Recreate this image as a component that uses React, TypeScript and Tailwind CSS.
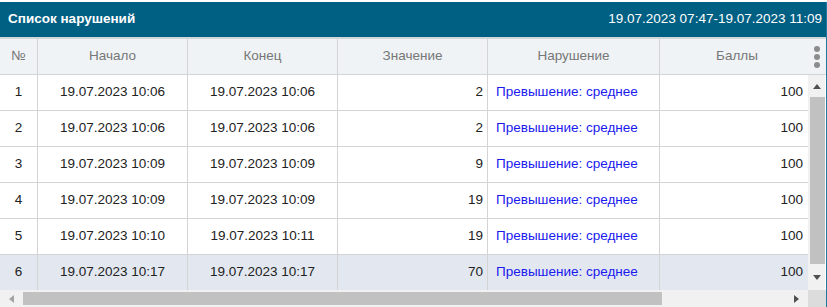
type Row = {
  n: number;
  start: string;
  end: string;
  value: number;
  violation: string;
  score: number;
};

const rows: Row[] = [
  { n: 1, start: "19.07.2023 10:06", end: "19.07.2023 10:06", value: 2, violation: "Превышение: среднее", score: 100 },
  { n: 2, start: "19.07.2023 10:06", end: "19.07.2023 10:06", value: 2, violation: "Превышение: среднее", score: 100 },
  { n: 3, start: "19.07.2023 10:09", end: "19.07.2023 10:09", value: 9, violation: "Превышение: среднее", score: 100 },
  { n: 4, start: "19.07.2023 10:09", end: "19.07.2023 10:09", value: 19, violation: "Превышение: среднее", score: 100 },
  { n: 5, start: "19.07.2023 10:10", end: "19.07.2023 10:11", value: 19, violation: "Превышение: среднее", score: 100 },
  { n: 6, start: "19.07.2023 10:17", end: "19.07.2023 10:17", value: 70, violation: "Превышение: среднее", score: 100 },
];

const Arrow = ({ dir }: { dir: "up" | "down" | "left" | "right" }) => {
  const pts = {
    up: "0,5 4,0 8,5",
    down: "0,0 8,0 4,5",
    left: "5,0 5,8 0,4",
    right: "0,0 0,8 5,4",
  }[dir];
  const horiz = dir === "left" || dir === "right";
  return (
    <svg width={horiz ? 5 : 8} height={horiz ? 8 : 5} viewBox={horiz ? "0 0 5 8" : "0 0 8 5"}>
      <polygon points={pts} fill={dir === "left" ? "#a3a3a3" : "#505050"} />
    </svg>
  );
};

// column menu dots in the header
const Dots = () => (
  <svg width="8" height="24" viewBox="0 0 8 24">
    <circle cx="4" cy="4" r="3" fill="#8c8c8c" />
    <circle cx="4" cy="12" r="3" fill="#8c8c8c" />
    <circle cx="4" cy="20" r="3" fill="#8c8c8c" />
  </svg>
);

const App = () => {
  return (
    <div className="w-[827px] h-[307px] bg-white overflow-hidden pt-[2px] font-['Liberation_Sans',Arial,sans-serif] text-[13.5px]">
      <div className="h-[305px] border-r border-[#1f7aa0] flex flex-col">
        <div className="h-[35px] shrink-0 bg-[#006083] flex items-center justify-between pl-[8px] pr-[4px] text-white">
          <span className="font-bold">Список нарушений</span>
          <span>19.07.2023 07:47-19.07.2023 11:09</span>
        </div>
        <div className="h-[2px] shrink-0 bg-[#d3d6d8]" />
        <div className="h-[36px] shrink-0 flex bg-[#eff3f6] text-[#777] border-b border-[#d4d4d4]">
          <div className="w-[38px] border-r border-[#d4d4d4] flex items-center justify-center">№</div>
          <div className="w-[150px] border-r border-[#d4d4d4] flex items-center justify-center">Начало</div>
          <div className="w-[150px] border-r border-[#d4d4d4] flex items-center justify-center">Конец</div>
          <div className="w-[150px] border-r border-[#d4d4d4] flex items-center justify-center">Значение</div>
          <div className="w-[172px] border-r border-[#d4d4d4] flex items-center justify-center">Нарушение</div>
          <div className="flex-1 flex items-center justify-center pl-[6px]">Баллы</div>
          <div className="w-[18px] flex items-center justify-center">
            <Dots />
          </div>
        </div>
        <div className="flex-1 flex min-h-0">
          <div className="w-[808px] flex flex-col text-[#222]">
            {rows.map((r, i) => (
              <div
                key={r.n}
                className={`flex ${i === rows.length - 1 ? "h-[35px] bg-[#e3e8f0]" : "h-[36px] border-b border-[#d4d4d4]"}`}
              >
                <div className="w-[38px] border-r border-[#d4d4d4] flex items-center justify-center">{r.n}</div>
                <div className="w-[150px] border-r border-[#d4d4d4] flex items-center justify-center">{r.start}</div>
                <div className="w-[150px] border-r border-[#d4d4d4] flex items-center justify-center">{r.end}</div>
                <div className="w-[150px] border-r border-[#d4d4d4] flex items-center justify-end pr-[4px]">{r.value}</div>
                <div className="w-[172px] border-r border-[#d4d4d4] flex items-center pl-[8px] text-[#1a1aee]">{r.violation}</div>
                <div className="flex-1 flex items-center justify-end pr-[5px]">{r.score}</div>
              </div>
            ))}
          </div>
          <div className="w-[17px] bg-[#f1f1f1] flex flex-col items-center">
            <div className="h-[22px] flex items-center justify-center">
              <Arrow dir="up" />
            </div>
            <div className="w-[15px] ml-[2px] h-[167px] bg-[#c1c1c1]" />
            <div className="flex-1 flex items-center justify-center">
              <Arrow dir="down" />
            </div>
          </div>
        </div>
        <div className="h-[17px] shrink-0 flex bg-[#f1f1f1]">
          <div className="w-[23px] flex items-center justify-center">
            <Arrow dir="left" />
          </div>
          <div className="w-[639px] my-[2px] bg-[#c1c1c1]" />
          <div className="w-[146px] flex items-center justify-end pr-[9px]">
            <Arrow dir="right" />
          </div>
          <div className="flex-1 bg-[#dcdcdc]" />
        </div>
      </div>
    </div>
  );
};

export default App;
